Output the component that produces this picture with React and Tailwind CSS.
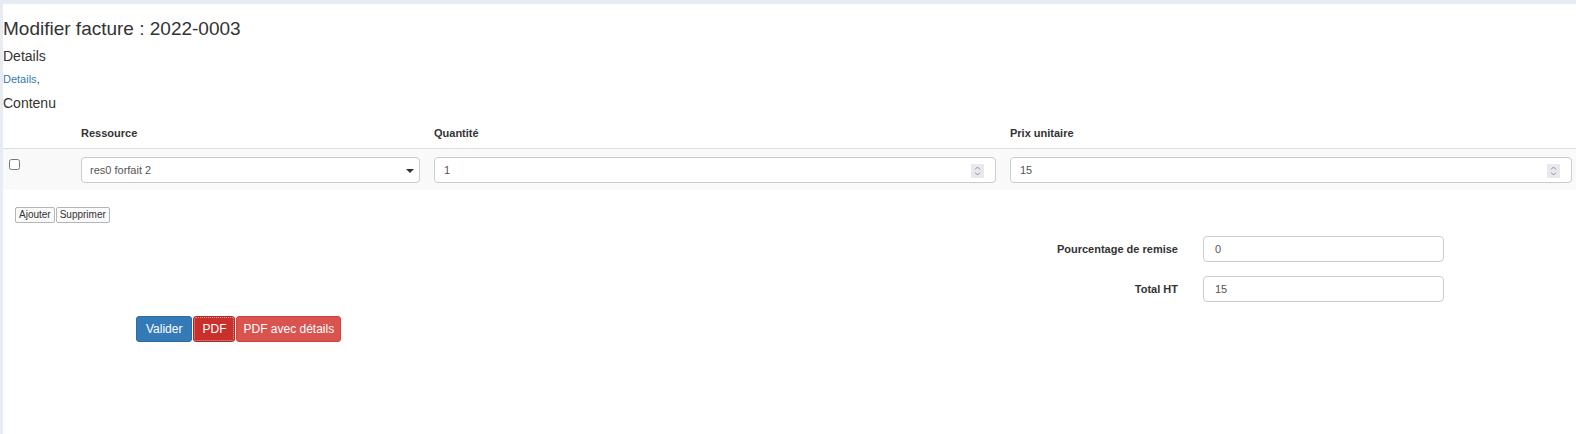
import React from "react";

function Spinner() {
  return (
    <div className="absolute right-[11px] top-[6px] w-[13px] h-[14px] bg-[#e9e9ed] flex items-center justify-center">
      <svg width="9" height="12" viewBox="0 0 9 12" fill="none" stroke="#8f8f9d" strokeWidth="1">
        <path d="M2 4.5 L4.5 2 L7 4.5" />
        <path d="M2 7.5 L4.5 10 L7 7.5" />
      </svg>
    </div>
  );
}

function NumInput({ value }) {
  return (
    <div className="relative h-[26px] border border-[#ccc] rounded-[4px] bg-white flex items-center pl-[9px] text-[11px] text-[#555]">
      {value}
      <Spinner />
    </div>
  );
}

export default function App() {
  return (
    <div className="min-h-[434px] bg-[#e6ecf1] pt-[4px] pl-[3px] font-['Liberation_Sans',Arial,sans-serif]">
      <div className="bg-white min-h-[430px] text-[#333]">
        <h3 className="pt-[14px] text-[19px] leading-[22px]">Modifier facture : 2022-0003</h3>
        <h4 className="mt-[8px] text-[14px] leading-[16px]">Details</h4>
        <div className="mt-[9px] text-[11px] leading-[13px]">
          <span className="text-[#337ab7]">Details</span>,
        </div>
        <h4 className="mt-[9px] text-[14px] leading-[16px]">Contenu</h4>

        <div className="mt-[1px]">
          <div className="grid grid-cols-[71px_353px_576px_1fr] h-[37px] border-b border-[#ddd] text-[11px] font-bold leading-[13px]">
            <div></div>
            <div className="pl-[7px] self-end pb-[8px]">Ressource</div>
            <div className="pl-[7px] self-end pb-[8px]">Quantité</div>
            <div className="pl-[7px] self-end pb-[8px]">Prix unitaire</div>
          </div>
          <div className="grid grid-cols-[71px_353px_576px_1fr] h-[41px] bg-[#f9f9f9] items-start">
            <div className="pl-[6px] pt-[10px] flex">
              <input type="checkbox" className="w-[11px] h-[11px] m-0" />
            </div>
            <div className="px-[7px] pt-[8px]">
              <div className="relative h-[26px] border border-[#ccc] rounded-[4px] bg-white flex items-center pl-[8px] text-[11px] text-[#555]">
                res0 forfait 2
                <svg className="absolute right-[5px] top-[11px]" width="8" height="4" viewBox="0 0 8 4">
                  <path d="M0 0 L8 0 L4 4 Z" fill="#333" />
                </svg>
              </div>
            </div>
            <div className="px-[7px] pt-[8px]">
              <NumInput value="1" />
            </div>
            <div className="pl-[7px] pr-[4px] pt-[8px]">
              <NumInput value="15" />
            </div>
          </div>
        </div>

        <div className="mt-[17px] ml-[12px] flex gap-[1px]">
          <button className="h-[16px] px-[3px] border border-[#b5b5b5] rounded-[2px] bg-[#fafafa] text-[10px] leading-[14px] text-[#333]">Ajouter</button>
          <button className="h-[16px] px-[3px] border border-[#b5b5b5] rounded-[2px] bg-[#fafafa] text-[10px] leading-[14px] text-[#333]">Supprimer</button>
        </div>

        <div className="mt-[13px] flex items-center">
          <div className="w-[1175px] text-right text-[11px] font-bold">Pourcentage de remise</div>
          <div className="ml-[25px] w-[241px] h-[26px] border border-[#ccc] rounded-[4px] flex items-center pl-[11px] text-[11px] text-[#555]">0</div>
        </div>
        <div className="mt-[14px] flex items-center">
          <div className="w-[1175px] text-right text-[11px] font-bold">Total HT</div>
          <div className="ml-[25px] w-[241px] h-[26px] border border-[#ccc] rounded-[4px] flex items-center pl-[11px] text-[11px] text-[#555]">15</div>
        </div>

        <div className="mt-[14px] ml-[133px] flex gap-[1px]">
          <button className="h-[26px] px-[9px] bg-[#337ab7] border border-[#2e6da4] rounded-[3px] text-white text-[12px]">Valider</button>
          <button className="h-[26px] px-[8px] bg-[#c9302c] border border-[#ac2925] rounded-[3px] text-white text-[12px] outline outline-1 outline-dotted outline-[#e0a0a0] -outline-offset-2">PDF</button>
          <button className="h-[26px] px-[6px] bg-[#d9534f] border border-[#d43f3a] rounded-[3px] text-white text-[12px]">PDF avec détails</button>
        </div>
      </div>
    </div>
  );
}
